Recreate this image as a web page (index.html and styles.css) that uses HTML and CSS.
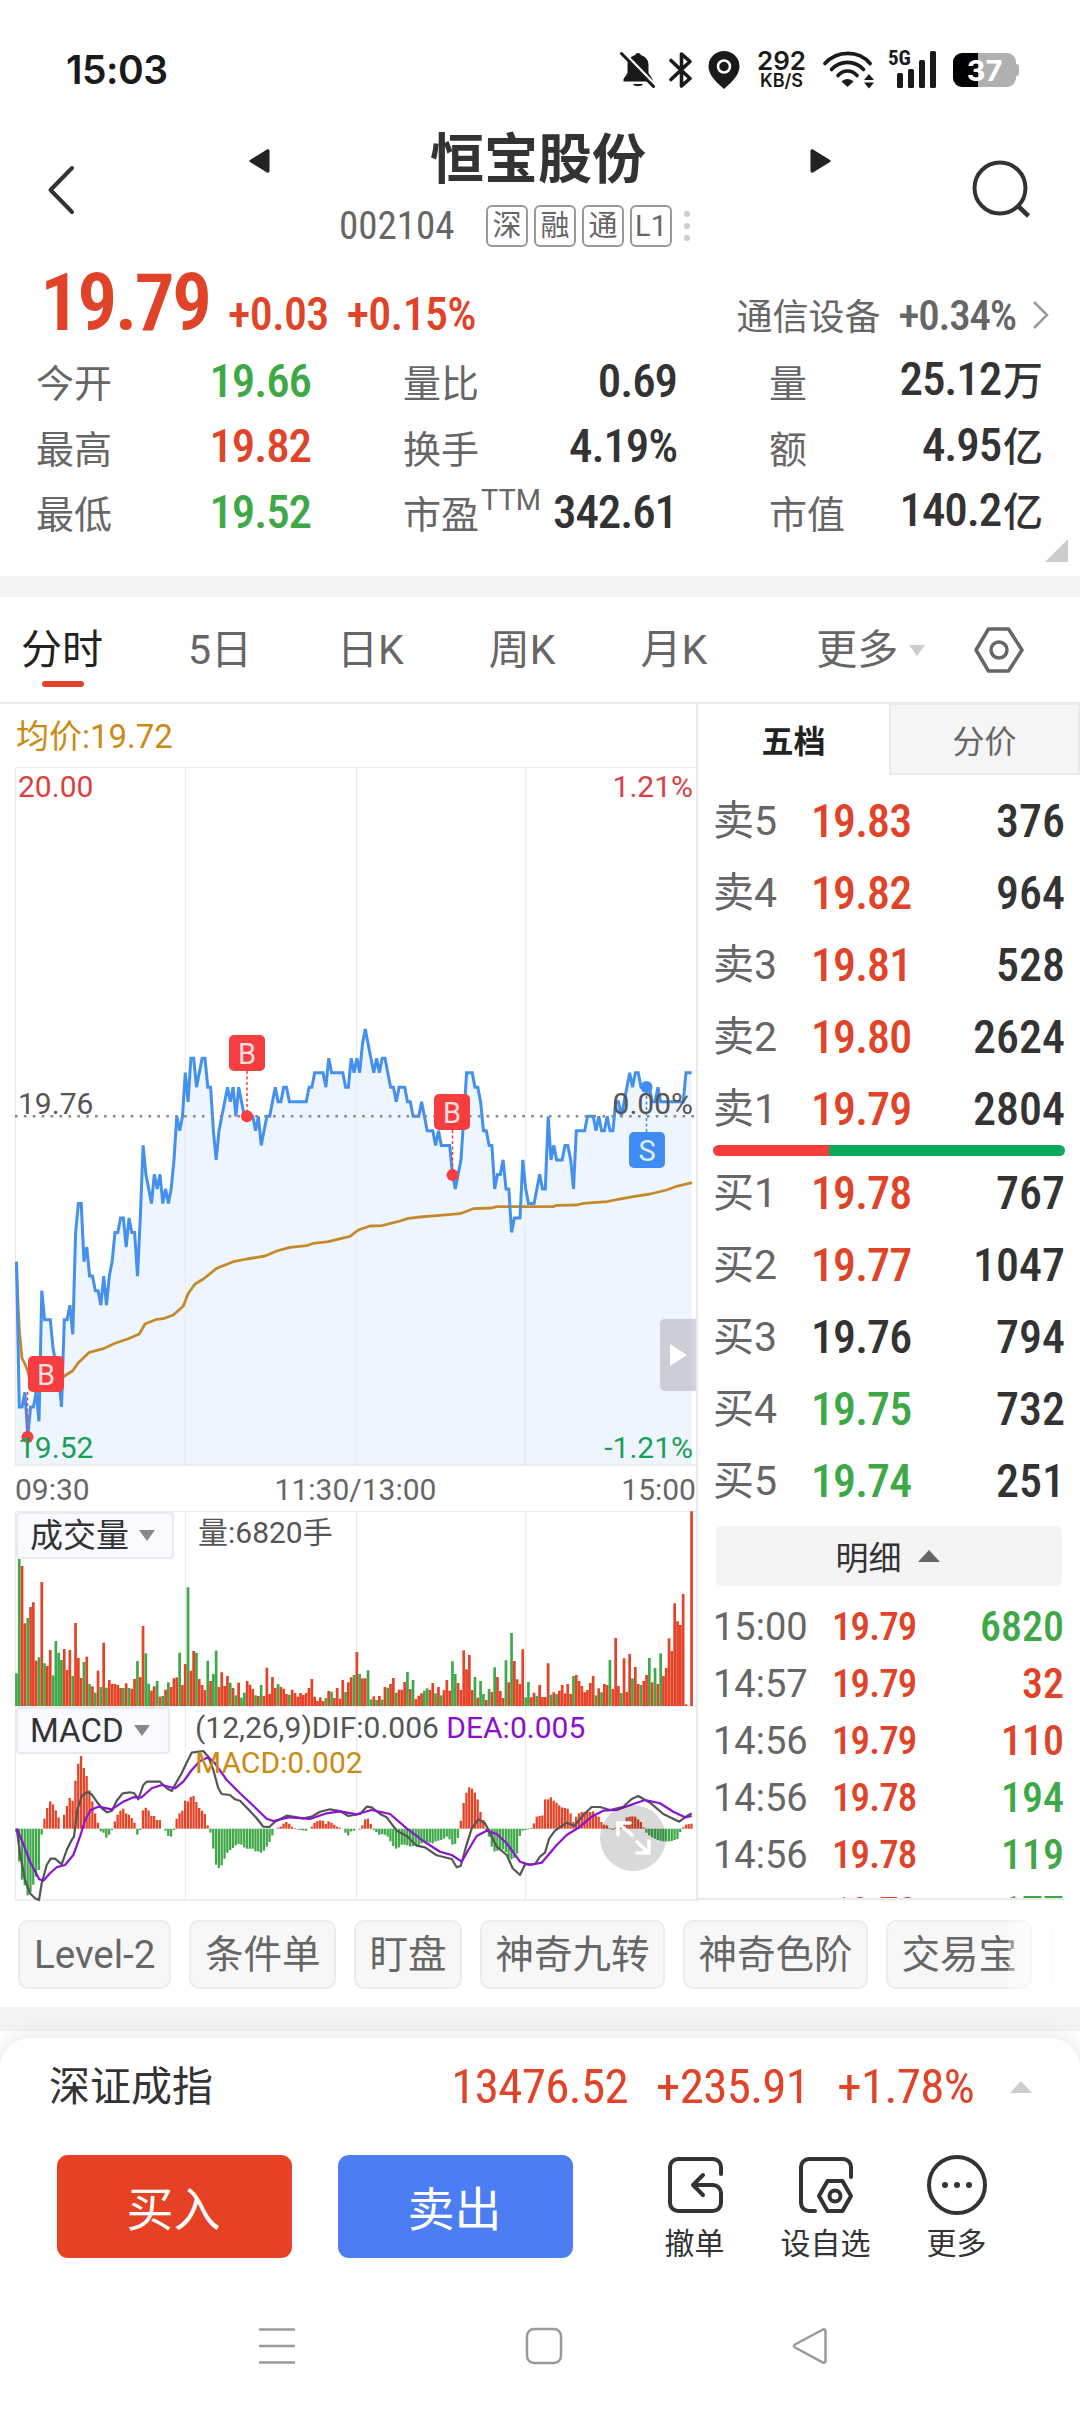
FILE: index.html
```html
<!DOCTYPE html>
<html lang="zh-CN">
<head>
    <meta charset="UTF-8">
    <meta name="viewport" content="width=device-width, initial-scale=1.0">
    <title>恒宝股份 002104</title>
    <link rel="stylesheet" href="styles.css">
</head>
<body>
    <div class="status-bar">
        <span class="clock">15:03</span>
        <div class="status-icons">
            <svg class="i-bell" width="36" height="38" viewBox="0 0 36 38">
                <path d="M18 2c1.500 0 2.500 .8 2.800 2 4.800 1.500 7.700 5 7.700 10v8l4 6v2.500H3.500V28l4-6v-8c0-5 2.900-8.500 7.700-10C15.500 2.800 16.500 2 18 2z" fill="#1a1a1a"/>
                <path d="M13 33h10c-1 3-9 3-10 0z" fill="#1a1a1a"/>
                <path d="M3 1L36 35" stroke="#fff" stroke-width="3"/>
                <path d="M1.500 2.500L33.500 35.500" stroke="#1a1a1a" stroke-width="3" stroke-linecap="round"/>
            </svg>
            <svg class="i-bt" width="24" height="38" viewBox="0 0 24 38">
                <path d="M2 9.500L21 27.500 12.500 35V3L21 10.500 2 28.500" fill="none" stroke="#1a1a1a" stroke-width="3.600" stroke-linejoin="round" stroke-linecap="round"/>
            </svg>
            <svg class="i-pin" width="32" height="38" viewBox="0 0 32 38">
                <path d="M16 0a15.500 15.500 0 0 1 15.500 15.500C31.500 24 24 31 16 38 8 31 .5 24 .5 15.500A15.500 15.500 0 0 1 16 0z" fill="#1a1a1a"/>
                <circle cx="16" cy="15.500" r="6" fill="#1a1a1a" stroke="#fff" stroke-width="2.500"/>
            </svg>
            <div class="net-speed"><b>292</b><span>KB/S</span></div>
            <svg class="i-wifi" width="52" height="38" viewBox="0 0 52 38">
                <g fill="none" stroke="#1a1a1a" stroke-width="3.600" stroke-linecap="round">
                    <path d="M2 12.500C14-1 36-1 47 12.500"/>
                    <path d="M8.500 18.500C17 9 32 9 40.500 18.500"/>
                    <path d="M15 24.500c5-6 14-6 19 0"/>
                </g>
                <path d="M18.500 30.500c3-3.500 9-3.500 12 0L24.500 36z" fill="#1a1a1a"/>
                <path d="M41 29l5-6 5 6zM41 31.500h10l-5 6z" fill="#1a1a1a"/>
            </svg>
            <div class="signal">
                <span>5G</span>
                <svg width="39" height="37" viewBox="0 0 39 37">
                    <g fill="#1a1a1a">
                        <rect x="0" y="22" width="6" height="15" rx="1.500"/>
                        <rect x="11" y="18" width="6" height="19" rx="1.500"/>
                        <rect x="22" y="9" width="6" height="28" rx="1.500"/>
                        <rect x="33" y="0" width="6" height="37" rx="1.500"/>
                    </g>
                </svg>
            </div>
            <div class="battery">37</div>
        </div>
    </div>

    <header class="header">
        <svg class="back" width="30" height="50" viewBox="0 0 30 50"><path d="M26 3L4.500 25 26 47" fill="none" stroke="#333" stroke-width="4" stroke-linecap="round" stroke-linejoin="round"/></svg>
        <div class="title-block">
            <div class="title-row">
                <svg width="22" height="26" viewBox="0 0 22 26"><path d="M19 1.500L2 12c-1 .6-1 1.400 0 2l17 10.500c1.500 .6 2.500 0 2.500-1.500V3c0-1.500-1-2.100-2.500-1.500z" fill="#222"/></svg>
                <h1>恒宝股份</h1>
                <svg width="22" height="26" viewBox="0 0 22 26"><path d="M3 1.500L20 12c1 .6 1 1.400 0 2L3 24.500c-1.500 .6-2.500 0-2.500-1.500V3c0-1.500 1-2.100 2.500-1.500z" fill="#222"/></svg>
            </div>
            <div class="code-row">
                <span class="code">002104</span>
                <span class="tag">深</span><span class="tag">融</span><span class="tag">通</span><span class="tag">L1</span>
                <span class="dots"><i></i><i></i><i></i></span>
            </div>
        </div>
        <svg class="search" width="62" height="62" viewBox="0 0 62 62">
            <circle cx="30" cy="29" r="25.500" fill="none" stroke="#333" stroke-width="4"/>
            <path d="M47 46l11.500 11" stroke="#333" stroke-width="4.500"/>
        </svg>
    </header>

    <section class="quote">
        <div class="price-row">
            <span class="price up">19.79</span>
            <span class="change up">+0.03</span>
            <span class="change up">+0.15%</span>
            <span class="sector">通信设备</span>
            <span class="sector-chg">+0.34%</span>
            <svg width="18" height="30" viewBox="0 0 18 30"><path d="M2 2l13 13L2 28" fill="none" stroke="#999" stroke-width="2.500"/></svg>
        </div>
        <div class="stats">
            <div><label>今开</label><b class="down">19.66</b></div>
            <div><label>量比</label><b>0.69</b></div>
            <div><label>量</label><b>25.12<em>万</em></b></div>
            <div><label>最高</label><b class="up">19.82</b></div>
            <div><label>换手</label><b>4.19%</b></div>
            <div><label>额</label><b>4.95<em>亿</em></b></div>
            <div><label>最低</label><b class="down">19.52</b></div>
            <div><label>市盈<sup>TTM</sup></label><b>342.61</b></div>
            <div><label>市值</label><b>140.2<em>亿</em></b></div>
        </div>
        <i class="corner"></i>
    </section>

    <nav class="tabs">
        <span class="tab active">分时</span>
        <span class="tab">5日</span>
        <span class="tab">日K</span>
        <span class="tab">周K</span>
        <span class="tab">月K</span>
        <span class="tab more">更多<i class="tri-down light"></i></span>
        <svg width="50" height="46" viewBox="0 0 50 46">
            <path d="M14.500 2h20L48 23 34.500 44h-20L2 23z" fill="none" stroke="#666" stroke-width="3.500" stroke-linejoin="round"/>
            <circle cx="25" cy="23" r="8" fill="none" stroke="#666" stroke-width="3.500"/>
        </svg>
    </nav>

    <main class="main">
        <div class="charts">
            <div class="avg">均价:19.72</div>
            <svg id="priceChart" width="696" height="700"></svg>
            <div class="axis"><span>09:30</span><span>11:30/13:00</span><span>15:00</span></div>
            <div class="pane">
                <svg id="volChart" width="696" height="195"></svg>
                <div class="pick">成交量<i class="tri-down"></i></div>
                <div class="legend">量:6820手</div>
            </div>
            <div class="pane">
                <svg id="macdChart" width="696" height="196"></svg>
                <div class="pick macd-pick">MACD<i class="tri-down"></i></div>
                <div class="legend macd-legend">(12,26,9)DIF:0.006 <span class="dea">DEA:0.005</span><br><span class="gold">MACD:0.002</span></div>
                <div class="expand">
                    <svg width="66" height="66" viewBox="0 0 66 66"><path d="M32 30L18 18m0 12V18h12M37 37l12 11m0-12v12H37" fill="none" stroke="#fff" stroke-width="3.600" stroke-linecap="round"/></svg>
                </div>
            </div>
            <div class="handle"><i></i></div>
        </div>

        <div class="book">
            <div class="book-tabs"><span class="on">五档</span><span>分价</span></div>
            <div class="level"><span>卖5</span><b class="up">19.83</b><b>376</b></div>
            <div class="level"><span>卖4</span><b class="up">19.82</b><b>964</b></div>
            <div class="level"><span>卖3</span><b class="up">19.81</b><b>528</b></div>
            <div class="level"><span>卖2</span><b class="up">19.80</b><b>2624</b></div>
            <div class="level"><span>卖1</span><b class="up">19.79</b><b>2804</b></div>
            <div class="ratio"></div>
            <div class="level"><span>买1</span><b class="up">19.78</b><b>767</b></div>
            <div class="level"><span>买2</span><b class="up">19.77</b><b>1047</b></div>
            <div class="level"><span>买3</span><b>19.76</b><b>794</b></div>
            <div class="level"><span>买4</span><b class="down">19.75</b><b>732</b></div>
            <div class="level"><span>买5</span><b class="down">19.74</b><b>251</b></div>
            <div class="detail-btn">明细<i class="tri-up"></i></div>
            <div class="ticks">
                <div class="tick"><span>15:00</span><b class="up">19.79</b><b class="down">6820</b></div>
                <div class="tick"><span>14:57</span><b class="up">19.79</b><b class="up">32</b></div>
                <div class="tick"><span>14:56</span><b class="up">19.79</b><b class="up">110</b></div>
                <div class="tick"><span>14:56</span><b class="up">19.78</b><b class="down">194</b></div>
                <div class="tick"><span>14:56</span><b class="up">19.78</b><b class="down">119</b></div>
                <div class="tick"><span></span><b class="up">19.78</b><b class="down">177</b></div>
            </div>
        </div>
    </main>

    <div class="chips">
        <span>Level-2</span><span>条件单</span><span>盯盘</span><span>神奇九转</span><span>神奇色阶</span><span>交易宝</span><span></span>
    </div>

    <div class="gap"></div>

    <footer class="sheet">
        <div class="index-row">
            <span class="index-name">深证成指</span>
            <span class="up">13476.52</span>
            <span class="up">+235.91</span>
            <span class="up">+1.78%</span>
            <i class="tri-up light"></i>
        </div>
        <div class="actions">
            <button class="buy">买入</button>
            <button class="sell">卖出</button>
            <div class="action">
                <svg width="60" height="60" viewBox="0 0 60 60"><path d="M56 19v-7a8 8 0 0 0-8-8H13a8 8 0 0 0-8 8v36a8 8 0 0 0 8 8h35a8 8 0 0 0 8-8V38a8 8 0 0 0-8-8H28M38 20L28 30l10 10" fill="none" stroke="#333" stroke-width="4" stroke-linecap="round" stroke-linejoin="round"/></svg>
                撤单
            </div>
            <div class="action">
                <svg width="60" height="60" viewBox="0 0 60 60">
                    <path d="M55 22V12a8 8 0 0 0-8-8H13a8 8 0 0 0-8 8v36a8 8 0 0 0 8 8h6" fill="none" stroke="#333" stroke-width="4" stroke-linecap="round"/>
                    <path d="M31.500 26h15L55 41l-8.500 15h-15L23 41z" fill="none" stroke="#333" stroke-width="4" stroke-linejoin="round"/>
                    <circle cx="39" cy="41" r="5.500" fill="none" stroke="#333" stroke-width="4"/>
                </svg>
                设自选
            </div>
            <div class="action">
                <svg width="60" height="60" viewBox="0 0 60 60">
                    <circle cx="30" cy="30" r="28" fill="none" stroke="#333" stroke-width="4"/>
                    <g fill="#333"><circle cx="18" cy="30" r="3"/><circle cx="30" cy="30" r="3"/><circle cx="42" cy="30" r="3"/></g>
                </svg>
                更多
            </div>
        </div>
        <div class="sys-nav">
            <svg width="40" height="40" viewBox="0 0 40 40"><path d="M2 3.500h36M2 20h36M2 36.500h36" stroke="#999" stroke-width="2.500"/></svg>
            <svg width="40" height="40" viewBox="0 0 40 40"><rect x="3" y="3" width="34" height="34" rx="7" fill="none" stroke="#999" stroke-width="2.500"/></svg>
            <svg width="40" height="40" viewBox="0 0 40 40"><path d="M33 3.500L5 18.500c-1.500 1-1.500 2 0 3L33 36.500c1.500 .6 2.500 0 2.500-1.500V5c0-1.500-1-2.100-2.500-1.500z" fill="none" stroke="#999" stroke-width="2.500"/></svg>
        </div>
    </footer>

    <script src="chart.js"></script>
</body>
</html>
```
FILE: styles.css
```css
* {
    box-sizing: border-box;
    margin: 0;
    padding: 0;
}

body {
    width: 1080px;
    height: 2412px;
    overflow: hidden;
    background: #fff;
    color: #333;
    font-family: Roboto, "Noto Sans CJK SC", sans-serif;
}

i, em {
    font-style: normal;
}

.up { color: #e04328; }
.down { color: #3ea847; }

/* status bar */
.status-bar {
    height: 139px;
    padding: 0 64px 0 66px;
    display: flex;
    align-items: center;
    justify-content: space-between;
    color: #1a1a1a;
    font-family: Inter, sans-serif;
}

.clock {
    font-size: 39px;
    font-weight: 600;
    letter-spacing: -0.5px;
}

.status-icons {
    display: flex;
    align-items: center;
}

.i-bt { margin-left: 13px; }
.i-pin { margin-left: 15px; }
.i-wifi { margin-left: 17px; }

.net-speed {
    margin-left: 17px;
    width: 49px;
    display: flex;
    flex-direction: column;
    align-items: center;
    font-size: 18px;
    font-weight: 600;
    line-height: 18px;
}

.net-speed b {
    font-size: 26px;
    font-weight: 600;
    line-height: 22px;
}

.signal {
    position: relative;
    margin-left: 22px;
    height: 37px;
}

.signal span {
    position: absolute;
    left: -9px;
    top: -3px;
    font: 700 21px/20px "Roboto Condensed", sans-serif;
}

.battery {
    position: relative;
    margin-left: 17px;
    width: 63px;
    height: 34px;
    border-radius: 9px;
    background: linear-gradient(90deg, #000 25px, #b0b0b0 25px);
    color: #fff;
    font-size: 29px;
    font-weight: 700;
    line-height: 35px;
    text-align: center;
}

.battery::after {
    content: "";
    position: absolute;
    right: -3px;
    top: 11px;
    width: 3px;
    height: 12px;
    border-radius: 0 3px 3px 0;
    background: #b0b0b0;
}

/* header */
.header {
    height: 124px;
    padding: 1px 48px 0 46px;
    display: flex;
    justify-content: space-between;
}

.back { margin-top: 25px; }
.search { margin-top: 19px; }

.title-block {
    width: 584px;
    margin-left: 34px;
    margin-top: -16px;
}

.title-row {
    height: 74px;
    display: flex;
    align-items: center;
    justify-content: space-between;
}

h1 {
    font-size: 54px;
    line-height: 74px;
    font-weight: 700;
    margin-right: 4px;
}

.code-row {
    height: 44px;
    margin-top: 6px;
    display: flex;
    align-items: center;
    padding-left: 91px;
    color: #666;
}

.code {
    font: 400 39px/44px "Roboto Condensed", sans-serif;
    width: 147px;
}

.tag {
    width: 42px;
    height: 42px;
    margin-right: 6px;
    border: 2px solid #999;
    border-radius: 6px;
    font-size: 29px;
    line-height: 38px;
    text-align: center;
}

.dots {
    display: flex;
    flex-direction: column;
    gap: 6px;
    margin-left: 6px;
}

.dots i {
    width: 6px;
    height: 6px;
    border-radius: 50%;
    background: #ccc;
}

/* quote */
.quote {
    position: relative;
    height: 313px;
    padding: 0 30px 0 36px;
}

.price-row {
    height: 85px;
    display: flex;
    align-items: baseline;
    font-family: "Roboto Condensed", "Noto Sans CJK SC", sans-serif;
}

.price {
    font-size: 80px;
    line-height: 80px;
    font-weight: 600;
    letter-spacing: -2.900px;
    padding-left: 4px;
    width: 192px;
}

.change {
    font-size: 46px;
    font-weight: 500;
    letter-spacing: -0.7px;
    margin-right: 18px;
}

.sector {
    margin-left: auto;
    font-size: 36px;
    color: #666;
}

.sector-chg {
    margin-left: 18px;
    font-size: 43px;
    font-weight: 500;
    letter-spacing: -1.200px;
    color: #666;
}

.price-row svg { margin-left: 16px; }

.stats {
    display: grid;
    grid-template-columns: 275px 274px 273px;
    column-gap: 92px;
    grid-auto-rows: 65.500px;
}

.stats div {
    display: flex;
    justify-content: space-between;
    align-items: center;
    white-space: nowrap;
}

.stats label {
    font-size: 38px;
    color: #666;
}

.stats sup {
    font-size: 29px;
    line-height: 0;
    vertical-align: 18px;
    margin-left: 2px;
}

.stats b {
    font: 500 47px/60px "Roboto Condensed", "Noto Sans CJK SC", sans-serif;
    letter-spacing: -1.1px;
}

.stats em {
    font-size: 40px;
    margin-left: 2px;
}

.corner {
    position: absolute;
    right: 12px;
    bottom: 14px;
    border-left: 23px solid transparent;
    border-bottom: 23px solid #ccc;
}

/* period tabs */
.tabs {
    height: 128px;
    border-top: 21px solid #f4f4f4;
    border-bottom: 2px solid #eaeaea;
    display: flex;
    align-items: center;
    padding: 1px 0 0 21px;
    color: #666;
    font-size: 41px;
}

.tab {
    position: relative;
    line-height: 60px;
    white-space: nowrap;
    margin-right: 85px;
}

.tab.active { color: #222; }

.tab.active::after {
    content: "";
    position: absolute;
    left: 21px;
    bottom: -7px;
    width: 42px;
    height: 6px;
    border-radius: 3px;
    background: #e04328;
}

.tab.more {
    display: flex;
    align-items: center;
    margin: 0 49px 0 24px;
}

.tri-down {
    display: inline-block;
    border: 8.5px solid transparent;
    border-top: 11px solid #888;
    border-bottom: 0;
    margin-left: 10px;
}

.tri-up {
    display: inline-block;
    border: 11px solid transparent;
    border-bottom: 12px solid #666;
    border-top: 0;
    margin-left: 16px;
}

.tri-down.light {
    border-top-color: #ccc;
    margin-left: 11px;
}

.tri-up.light {
    border-bottom-color: #ccc;
    margin-left: 36px;
}

/* charts column */
.main {
    height: 1197px;
    display: flex;
}

.charts {
    position: relative;
    width: 698px;
    border-right: 2px solid #eaeaea;
}

.charts > svg, .pane > svg { display: block; }

.avg {
    height: 63px;
    padding-left: 16px;
    font-size: 33px;
    line-height: 66px;
    color: #cb8a12;
}

.axis {
    height: 44px;
    padding: 0 0 0 15px;
    display: flex;
    justify-content: space-between;
    font-size: 30px;
    line-height: 46px;
    color: #666;
}

.pane { position: relative; }

.pick {
    position: absolute;
    left: 16px;
    top: 1px;
    width: 158px;
    height: 47px;
    padding-left: 12px;
    border: 2px solid #eaeaea;
    border-radius: 4px;
    background: #f8faff;
    font-size: 33px;
    line-height: 43px;
    display: flex;
    align-items: center;
    white-space: nowrap;
}

.macd-pick { width: 154px; }

.legend {
    position: absolute;
    left: 198px;
    top: 0;
    font-size: 30px;
    line-height: 43px;
    color: #555;
    white-space: nowrap;
}

.macd-legend {
    left: 195px;
    top: 4px;
    line-height: 35px;
}

.dea { color: #8a0fd0; }
.gold { color: #cb8a12; }

.expand {
    position: absolute;
    left: 600px;
    top: 99px;
    width: 66px;
    height: 66px;
    border-radius: 50%;
    background: rgba(0, 0, 0, 0.15);
}

.handle {
    position: absolute;
    right: 0;
    top: 615px;
    width: 36px;
    height: 72px;
    border-radius: 5px 0 0 5px;
    background: rgba(160, 160, 165, 0.45);
}

.handle i {
    position: absolute;
    left: 10px;
    top: 25px;
    border: 11px solid transparent;
    border-left: 17px solid #fff;
    border-right: 0;
}

svg text { font-family: Roboto, sans-serif; }

/* order book */
.book {
    flex: 1;
}

.book-tabs {
    display: flex;
    height: 71px;
    font-size: 32px;
}

.book-tabs span {
    flex: 1;
    text-align: center;
    line-height: 74px;
    color: #666;
    background: #f5f5f5;
    border: 2px solid #eaeaea;
    border-top-width: 1px;
}

.book-tabs .on {
    background: #fff;
    border-color: #fff;
    color: #222;
    font-weight: 700;
}

.level, .tick {
    display: flex;
    align-items: center;
    height: 72px;
    padding: 0 15px;
}

.book-tabs + .level { margin-top: 10px; }

.level span {
    width: 98px;
    padding-bottom: 1px;
    font-size: 41px;
    line-height: 60px;
    color: #666;
}

.level b, .tick b {
    font: 500 46px/60px "Roboto Condensed", sans-serif;
    letter-spacing: -0.9px;
}

.level b:last-child, .tick b:last-child {
    margin-left: auto;
    letter-spacing: 0;
}

.ratio {
    width: 352px;
    height: 11px;
    margin: 0 0 1px 15px;
    border-radius: 6px;
    background: linear-gradient(90deg, #f63d3c 116px, #0aa85a 116px);
}

.detail-btn {
    height: 60px;
    margin: 9px 18px 12px;
    padding-right: 3px;
    border-radius: 5px;
    background: #f4f4f4;
    display: flex;
    align-items: center;
    justify-content: center;
    font-size: 33px;
}

.ticks {
    height: 302px;
    margin-right: 16px;
    overflow: hidden;
    border-bottom: 2px solid #eaeaea;
}

.tick {
    height: 57px;
    padding: 0 0 0 15px;
}

.tick span {
    width: 119px;
    font-size: 38px;
    color: #666;
}

.tick b { font-size: 39px; }
.tick b:last-child { font-size: 42px; }

/* tool chips */
.chips {
    position: relative;
    height: 106px;
    padding: 19px 0 0 18px;
    display: flex;
    gap: 18px;
    overflow: hidden;
}

.chips span {
    flex: none;
    min-width: 100px;
    height: 69px;
    padding: 0 13.5px;
    border: 2px solid #ececec;
    border-radius: 10px;
    background: #f7f7f7;
    color: #666;
    font-size: 38.5px;
    line-height: 66px;
}

.chips span:first-child { padding: 0 14px; }

.chips::after {
    content: "";
    position: absolute;
    right: 0;
    top: 0;
    width: 72px;
    height: 100%;
    background: linear-gradient(90deg, rgba(255, 255, 255, 0.3), #fff 75%);
}

.gap {
    height: 24px;
    background: #f4f4f4;
}

/* bottom sheet */
.sheet {
    position: relative;
    height: 374px;
    margin-top: 7px;
    border-radius: 30px 30px 0 0;
    background: #fff;
    box-shadow: 0 0 24px rgba(0, 0, 0, 0.12);
}

.index-row {
    height: 98px;
    padding: 0 48px 0 49px;
    display: flex;
    align-items: center;
    font: 400 49px/96px "Roboto Condensed", "Noto Sans CJK SC", sans-serif;
}

.index-row .up {
    margin-left: 28px;
    letter-spacing: -0.7px;
}

.index-row .index-name {
    margin-right: auto;
    font-size: 41px;
}

.actions {
    padding: 19px 0 0 57px;
    display: flex;
}

.actions button {
    width: 235px;
    height: 103px;
    margin-right: 46px;
    padding: 0 2px 2px 0;
    border: none;
    border-radius: 11px;
    color: #fff;
    font-family: inherit;
    font-size: 47px;
}

.actions .buy { background: #e64124; }
.actions .sell { background: #4d7df3; }

.action {
    width: 131px;
    height: 117px;
    display: flex;
    flex-direction: column;
    align-items: center;
    font-size: 30px;
    line-height: 57px;
}

.action svg { flex: none; }

.sell + .action { margin-left: 10px; }

.sys-nav {
    padding: 54px 250px 0 257px;
    display: flex;
    justify-content: space-between;
}
```
FILE: chart.js
```js
const RED = '#e64226';
const GREEN = '#3fa94a';
const STEP = 2.813;   // px per minute, 241 minutes
const X0 = 16.5;

// price in 0.01 ticks from the previous close
const price = [
    -10,-20,-20,-19,-22,-20,-20,-19,-21,-12,-14,-14,-14,-16,-17,-18,-20,-14,-14,-13,
    -15,-8,-6,-6,-10,-9,-11,-11,-12,-12,-13,-11,-13,-11,-10,-8,-8,-7,-7,-9,
    -7,-8,-8,-11,-7,-2,-4,-5,-6,-4,-5,-4,-6,-5,-6,-5,-3,0,-1,0,
    3,1,4,4,2,3,4,4,2,2,-1,-3,-1,0,1,2,1,2,0,2,
    1,0,0,0,0,-1,0,-2,-1,0,0,1,2,1,1,2,2,1,1,1,
    1,1,1,1,2,2,3,3,3,3,2,4,3,3,3,3,3,2,2,4,
    3,4,3,5,6,5,4,3,4,3,4,4,3,2,2,1,2,2,2,1,
    1,0,0,0,1,0,-1,-1,-1,-2,-1,-2,-2,-2,-2,-4,-5,-4,-3,0,
    3,3,3,2,2,1,-1,-1,-2,-2,-5,-4,-4,-3,-5,-5,-8,-7,-7,-7,
    -3,-5,-6,-6,-6,-5,-4,-5,-5,0,-3,-2,-3,-3,-3,-2,-2,-3,-5,-1,
    -1,-1,-1,0,0,0,-1,0,-1,-1,0,-1,-1,1,1,0,1,2,3,2,
    3,3,2,2,2,2,1,1,2,1,1,1,1,1,1,1,1,1,3,3,3
];

// average line, [x, y] on a 3x grid
const avg = [
    49,401, 53,500, 58,604, 66,689, 74,704, 84,729, 95,779, 110,794, 130,780, 160,760, 190,744, 218,726, 235,702,
    268,671, 310,660, 345,644, 385,630, 418,616, 435,586, 470,572, 490,570, 520,559, 550,532, 565,494, 585,466,
    610,451, 650,419, 700,399, 740,391, 795,382, 830,367, 870,356, 920,351, 940,344, 985,339, 1050,323,
    1075,304, 1110,292, 1145,291, 1200,277, 1225,269, 1260,265, 1320,260, 1380,255, 1420,240, 1475,238, 1490,234,
    1660,234, 1670,230, 1730,229, 1750,224, 1820,219, 1860,211, 1900,204, 1950,196, 2000,184, 2030,173, 2076,162
];

// volume bars: height on a 3x grid, negative = green
const volume = [
    -98,-441,420,248,-264,297,311,136,-146,372,-128,120,168,-92,-195,-160,-138,171,108,168,
    -90,249,144,84,-132,148,-66,59,-40,106,-57,190,-55,78,66,66,63,54,-54,68,
    -54,52,81,-135,87,240,-158,-67,46,59,-75,28,-30,49,-71,57,83,86,-160,63,
    126,-356,106,165,-160,81,63,48,-136,75,-96,-166,57,101,60,90,-70,54,-32,70,
    -25,-40,75,64,51,-32,30,-63,30,115,36,87,54,-66,57,52,36,-34,49,39,
    28,39,33,39,54,81,28,15,26,15,-24,45,-43,24,54,22,78,-42,71,86,
    -93,162,-96,83,83,-107,-20,29,-18,30,-19,57,-54,66,84,-40,49,49,72,-102,
    51,-78,21,31,38,-46,-53,48,69,-38,57,-32,48,78,46,-134,-96,69,48,167,
    110,153,48,-87,25,-75,-36,18,-51,42,-116,87,45,24,-137,71,-219,135,80,66,
    170,-26,-72,26,40,-30,63,27,27,128,-34,41,-36,46,63,38,66,36,-90,93,
    75,60,41,48,69,90,-32,53,-41,66,63,-138,51,204,60,-39,143,42,156,-83,
    117,66,-63,75,93,-144,71,-114,66,-158,90,114,203,165,308,254,243,336,5,0,584
];

const hist = [
    -10,-98,-153,-170,-200,-190,-168,-144,-124,-18,30,62,82,73,55,34,0,42,68,92,
    84,144,195,218,182,158,115,82,46,18,-8,-12,-27,-18,-4,22,42,54,60,46,
    42,32,18,-18,-4,55,63,55,38,38,26,26,0,-6,-22,-24,-4,30,46,54,
    84,82,95,98,80,62,54,44,10,-12,-60,-108,-118,-110,-90,-72,-64,-58,-50,-46,
    -48,-56,-60,-60,-60,-68,-68,-72,-66,-54,-40,-20,0,3,6,15,20,15,6,2,
    -2,-4,-5,-6,0,6,18,23,25,24,14,22,18,12,6,3,0,-12,-20,-8,
    -6,0,-3,10,28,30,14,-4,-10,-18,-16,-18,-24,-38,-52,-60,-56,-48,-48,-50,
    -54,-52,-50,-52,-44,-40,-40,-42,-44,-38,-36,-34,-30,-24,-32,-48,-46,-28,24,77,
    108,124,120,108,88,50,26,-4,-24,-54,-68,-66,-60,-62,-70,-88,-92,-88,-75,-22,
    -6,-4,-2,2,16,36,38,40,88,88,94,84,78,70,64,62,60,46,20,36,
    46,50,50,52,50,52,38,36,20,12,10,2,-4,3,6,4,16,34,36,37,
    36,28,20,4,-12,-20,-26,-30,-34,-36,-38,-38,-38,-37,-34,-31,-10,4,12,14,15
];

const dif = [
    50,368, 60,442, 75,522, 90,562, 105,577, 117,582, 125,532, 140,477, 152,458, 165,458, 185,475, 200,432,
    215,402, 222,392, 232,312, 245,270, 262,258, 275,265, 290,287, 308,309, 322,319, 336,314, 350,284, 368,262,
    390,259, 403,262, 415,280, 430,237, 440,227, 480,227, 500,247, 515,255, 530,227, 545,202, 558,174, 575,140,
    610,135, 625,152, 640,192, 655,247, 665,264, 690,267, 705,280, 720,284, 745,310, 770,337, 790,362, 808,363,
    825,347, 860,329, 910,337, 935,332, 960,317, 990,310, 1020,315, 1045,330, 1080,324, 1100,302, 1115,304,
    1140,324, 1160,334, 1190,374, 1220,390, 1250,419, 1275,424, 1310,448, 1355,459, 1370,484, 1382,480,
    1398,422, 1415,367, 1435,340, 1455,352, 1470,382, 1490,422, 1520,447, 1538,487, 1560,507, 1575,475,
    1605,474, 1620,452, 1635,440, 1648,397, 1665,374, 1700,350, 1723,360, 1750,327, 1775,303, 1800,303,
    1830,312, 1870,302, 1895,279, 1915,270, 1950,290, 1990,324, 2038,347, 2055,334, 2075,322
];

const dea = [
    50,368, 65,402, 90,467, 118,520, 130,524, 150,502, 170,484, 195,477, 220,447, 240,392, 255,342, 272,312,
    295,302, 335,310, 370,287, 400,274, 425,274, 455,247, 485,237, 525,247, 550,227, 575,192, 600,165,
    625,154, 645,172, 680,222, 720,262, 760,299, 800,338, 820,345, 870,334, 930,339, 980,322, 1020,316,
    1070,325, 1115,312, 1170,324, 1220,367, 1270,405, 1320,437, 1355,447, 1385,467, 1405,432, 1430,390,
    1460,374, 1490,384, 1520,412, 1560,467, 1590,477, 1625,470, 1670,417, 1700,387, 1740,362, 1775,332,
    1810,314, 1850,312, 1900,294, 1935,282, 1980,292, 2020,317, 2055,334, 2075,330
];

const x = i => (X0 + i * STEP).toFixed(1);

function grid(h, top, bottom) {
    let s = '';
    [15.5, 185.5, 356.5, 525.5].forEach(gx => {
        s += `<path d="M${gx} 0V${h}" stroke="#ececec" stroke-width="1.200"/>`;
    });
    if (top) s += '<path d="M15 .5H696" stroke="#ececec"/>';
    if (bottom) s += `<path d="M15 ${h - 1}H696" stroke="#e8e8e8" stroke-width="1.500"/>`;
    return s;
}

function trace(list, dy, color, w) {
    let pts = '';
    for (let i = 0; i < list.length; i += 2) {
        pts += (list[i] / 3).toFixed(1) + ',' + ((list[i + 1] + dy) / 3).toFixed(1) + ' ';
    }
    return `<polyline points="${pts}" fill="none" stroke="${color}" stroke-width="${w}" stroke-linejoin="round"/>`;
}

function label(tx, ty, text, color, anchor = 'start') {
    return `<text x="${tx}" y="${ty}" font-size="30" fill="${color}" text-anchor="${anchor}">${text}</text>`;
}

function mark(bx, by, text, color, px, py) {
    const end = py > by ? by + 36 : by;
    return `<path d="M${px} ${end}V${py}" stroke="${color}" stroke-width="1.500" stroke-dasharray="3 2.500"/>
        <circle cx="${px}" cy="${py}" r="6" fill="${color}"/>
        <rect x="${bx}" y="${by}" width="36" height="36" rx="5" fill="${color}"/>
        <text x="${bx + 18}" y="${by + 28.5}" font-size="29" fill="#fff" fill-opacity=".85" text-anchor="middle">${text}</text>`;
}

function drawPrice() {
    const mid = 349.3;
    const pts = price.map((p, i) => x(i) + ',' + (mid - p * 14.53).toFixed(1)).join(' ');
    document.getElementById('priceChart').innerHTML =
        `<polygon points="${X0},698 ${pts} ${x(240)},698" fill="#eef5fe"/>` +
        grid(699, true, true) +
        trace(avg, 1085, '#c5892a', 2.8) +
        `<polyline points="${pts}" fill="none" stroke="#4390ee" stroke-width="3"/>` +
        `<path d="M15 ${mid}H694" stroke="#888" stroke-width="2.600" stroke-dasharray="2.600 6.300"/>` +
        mark(229, 268, 'B', '#f63d3f', 247, mid) +
        mark(434, 327, 'B', '#f63d3f', 452.5, 408) +
        mark(28, 589, 'B', '#f63d3f', 27.5, 670) +
        mark(629, 365, 'S', '#3f8df2', 646.5, 320) +
        label(18, 30, '20.00', '#dc3f41') +
        label(693, 30, '1.21%', '#dc3f41', 'end') +
        label(18, 347, '19.76', '#555') +
        label(693, 347, '0.00%', '#555', 'end') +
        label(18, 691, '19.52', '#18a058') +
        label(693, 691, '-1.21%', '#18a058', 'end');
}

function drawVolume() {
    let s = grid(195, true, false);
    volume.forEach((v, i) => {
        const h = Math.abs(v) / 3;
        s += `<rect x="${(X0 + i * STEP - 1.4).toFixed(1)}" y="${(195 - h).toFixed(1)}" width="2.700" height="${h.toFixed(1)}" fill="${v < 0 ? GREEN : RED}"/>`;
    });
    document.getElementById('volChart').innerHTML = s;
}

function drawMacd() {
    const zero = 122.7;
    let s = grid(195, true, true);
    hist.forEach((v, i) => {
        const h = Math.abs(v) / 3;
        s += `<rect x="${(X0 + i * STEP - 1.3).toFixed(1)}" y="${(v > 0 ? zero - h : zero).toFixed(1)}" width="2.300" height="${h.toFixed(1)}" fill="${v < 0 ? GREEN : RED}"/>`;
    });
    s += trace(dif, 0, '#555', 2.2) + trace(dea, 0, '#8a12d4', 2.2);
    document.getElementById('macdChart').innerHTML = s;
}

drawPrice();
drawVolume();
drawMacd();
```
